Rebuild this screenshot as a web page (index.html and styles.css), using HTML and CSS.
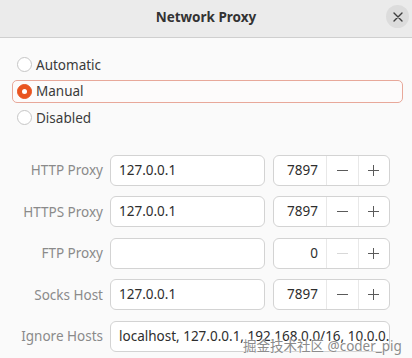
FILE: index.html
```html
<!DOCTYPE html>
<html lang="en">
<head>
  <meta charset="UTF-8" />
  <meta name="viewport" content="width=device-width, initial-scale=1.0"/>
  <title>Network Proxy</title>
  <link rel="stylesheet" href="styles.css">
</head>
<body>

  <div class="header">
    <div class="title">Network Proxy</div>
    <button class="close" aria-label="Close">
      <svg width="10" height="10" viewBox="0 0 10 10"><path d="M1 1L9 9M9 1L1 9" stroke="#3d3d3d" stroke-width="1.4" stroke-linecap="round"/></svg>
    </button>
  </div>

  <div class="content">
    <div class="modes">
      <label class="mode"><span class="radio"></span>Automatic</label>
      <label class="mode focused"><span class="radio checked"></span>Manual</label>
      <label class="mode"><span class="radio"></span>Disabled</label>
    </div>

    <div class="fields">
      <div class="row">
        <div class="label">HTTP Proxy</div>
        <div class="entry">127.0.0.1</div>
        <div class="spin">
          <div class="num">7897</div>
          <div class="btn"><svg width="11" height="11" viewBox="0 0 11 11"><path d="M0 5.5H11" stroke="currentColor"/></svg></div>
          <div class="btn"><svg width="11" height="11" viewBox="0 0 11 11"><path d="M0 5.5H11M5.5 0V11" stroke="currentColor"/></svg></div>
        </div>
      </div>
      <div class="row">
        <div class="label">HTTPS Proxy</div>
        <div class="entry">127.0.0.1</div>
        <div class="spin">
          <div class="num">7897</div>
          <div class="btn"><svg width="11" height="11" viewBox="0 0 11 11"><path d="M0 5.5H11" stroke="currentColor"/></svg></div>
          <div class="btn"><svg width="11" height="11" viewBox="0 0 11 11"><path d="M0 5.5H11M5.5 0V11" stroke="currentColor"/></svg></div>
        </div>
      </div>
      <div class="row">
        <div class="label">FTP Proxy</div>
        <div class="entry"></div>
        <div class="spin">
          <div class="num">0</div>
          <div class="btn off"><svg width="11" height="11" viewBox="0 0 11 11"><path d="M0 5.5H11" stroke="currentColor"/></svg></div>
          <div class="btn"><svg width="11" height="11" viewBox="0 0 11 11"><path d="M0 5.5H11M5.5 0V11" stroke="currentColor"/></svg></div>
        </div>
      </div>
      <div class="row">
        <div class="label">Socks Host</div>
        <div class="entry">127.0.0.1</div>
        <div class="spin">
          <div class="num">7897</div>
          <div class="btn"><svg width="11" height="11" viewBox="0 0 11 11"><path d="M0 5.5H11" stroke="currentColor"/></svg></div>
          <div class="btn"><svg width="11" height="11" viewBox="0 0 11 11"><path d="M0 5.5H11M5.5 0V11" stroke="currentColor"/></svg></div>
        </div>
      </div>
      <div class="row">
        <div class="label">Ignore Hosts</div>
        <div class="entry wide">localhost, 127.0.0.1, 192.168.0.0/16, 10.0.0.0/8, 172.16.0.0/12, ::1</div>
      </div>
    </div>
  </div>

  <div class="watermark">掘金技术社区 @coder_pig</div>

</body>
</html>
```

FILE: styles.css
```css
body {
  margin: 0;
  font-family: "Noto Sans", "Noto Sans CJK SC", sans-serif;
  font-size: 13.5px;
  color: #333;
  background: #fafafa;
  height: 358px;
  overflow: hidden;
  position: relative;
}
.header {
  height: 37px;
  background: #ebebeb;
  border-bottom: 1px solid #cfcfcf;
  display: flex;
  align-items: center;
  justify-content: center;
  position: relative;
}
.title {
  font-weight: bold;
  font-size: 13.5px;
  color: #333;
  margin-top: -4px;
}
.close {
  position: absolute;
  right: 3px;
  top: 5px;
  width: 23px;
  height: 23px;
  border-radius: 50%;
  border: none;
  background: #dcdcdc;
  display: flex;
  align-items: center;
  justify-content: center;
  padding: 0;
}
.content {
  padding: 15px 9px 0 12px;
}
.modes {
  display: flex;
  flex-direction: column;
}
.mode {
  display: flex;
  align-items: center;
  box-sizing: border-box;
  height: 23px;
  margin-bottom: 3.5px;
  padding-left: 4px;
  border: 1px solid transparent;
  border-radius: 5px;
  color: #3a3a3a;
}
.mode.focused {
  border-color: #e8a89a;
  background: #fdfbfb;
}
.radio {
  width: 13px;
  height: 13px;
  border: 1px solid #c6c6c6;
  border-radius: 50%;
  background: #fff;
  margin-right: 4px;
  box-sizing: content-box;
}
.radio.checked {
  background: #e95420;
  border-color: #e95420;
  position: relative;
}
.radio.checked::after {
  content: "";
  position: absolute;
  left: 4px;
  top: 4px;
  width: 5px;
  height: 5px;
  border-radius: 50%;
  background: #fff;
}
.fields {
  margin-top: 22px;
  display: flex;
  flex-direction: column;
  gap: 10.5px;
}
.row {
  display: flex;
  align-items: center;
  height: 31px;
}
.label {
  width: 91px;
  text-align: right;
  color: #8a8a8a;
  margin-right: 7px;
  white-space: nowrap;
}
.entry {
  width: 155px;
  height: 31px;
  box-sizing: border-box;
  border: 1px solid #d3d3d3;
  border-radius: 6px;
  background: #fff;
  padding: 0 8px;
  line-height: 29px;
  white-space: nowrap;
  overflow: hidden;
  color: #2e2e2e;
  margin-right: 8px;
}
.entry.wide {
  width: 280px;
  margin-right: 0;
}
.spin {
  display: flex;
  width: 117px;
  height: 31px;
  box-sizing: border-box;
  border: 1px solid #d3d3d3;
  border-radius: 6px;
  background: #fff;
}
.num {
  width: 52px;
  text-align: right;
  padding-right: 8px;
  box-sizing: border-box;
  line-height: 29px;
  color: #2e2e2e;
}
.btn {
  flex: 1;
  border-left: 1px solid #e8e8e8;
  display: flex;
  align-items: center;
  justify-content: center;
  color: #5a5a5a;
}
.btn.off {
  color: #d8d8d8;
}
.watermark {
  position: absolute;
  left: 243px;
  top: 335px;
  font-size: 13.5px;
  color: #8c8c8c;
  text-shadow: 0 0 1px #fff, 0 0 2px #fff;
  white-space: nowrap;
}
```
